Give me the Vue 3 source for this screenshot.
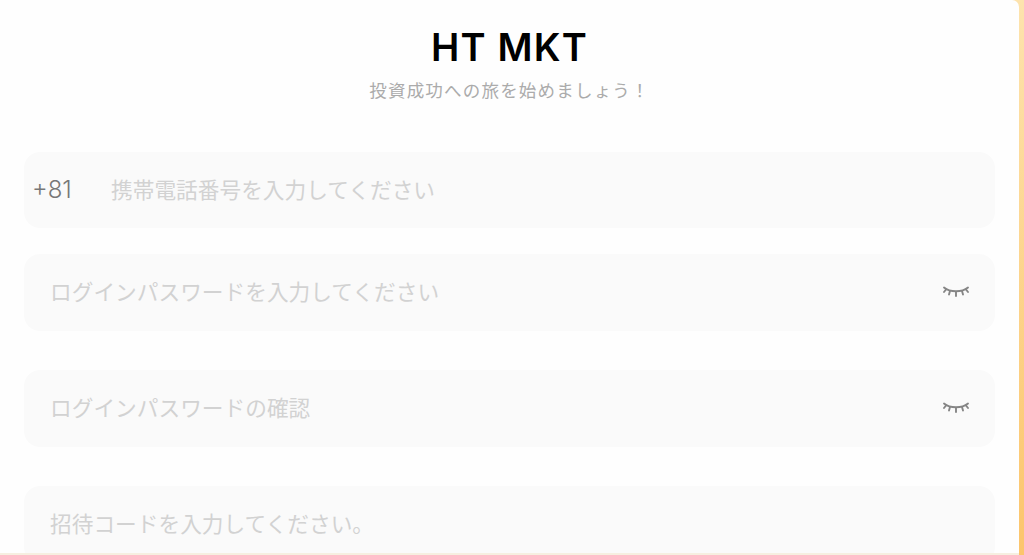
<template>
  <main class="page">
    <section class="card">
      <!-- Header -->
      <header class="head">
        <h1>HT MKT</h1>
        <p class="sub">投資成功への旅を始めましょう！</p>
      </header>

      <form class="form" @submit.prevent>
        <label class="field phone">
          <span class="code">+81</span>
          <input type="tel" placeholder="携帯電話番号を入力してください" />
        </label>

        <label v-for="f in passwordFields" :key="f" class="field">
          <input type="password" :placeholder="f" />
          <svg class="eye" width="26" height="12" viewBox="0 0 26 12" fill="none">
            <path d="M1 1.5C7 6.5 19 6.5 25 1.5" />
            <path d="M7 5L6 8.5M13 6V10M19 5L20 8.5M3 3.5L1 6M23 3.5L25 6" />
          </svg>
        </label>

        <label class="field">
          <input type="text" placeholder="招待コードを入力してください。" />
        </label>
      </form>
    </section>
  </main>
</template>

<script setup>
const passwordFields = [
  'ログインパスワードを入力してください',
  'ログインパスワードの確認',
]
</script>

<style>
html,
body {
  margin: 0;
  overflow: hidden;
}
</style>

<style scoped>
.page {
  height: 555px;
  box-sizing: border-box;
  padding-right: 5px;
  background: linear-gradient(180deg, #fde3ad, #fcc56c);
  overflow: hidden;
  font-family: "Liberation Sans", "Noto Sans CJK JP", sans-serif;
}

.card {
  height: 100%;
  box-sizing: border-box;
  padding: 0 24px;
  background: #fefefe;
  border-bottom: 2px solid #f6efe0;
  border-top-right-radius: 7px;
  overflow: hidden;
}

.head {
  padding-top: 25px;
  margin-bottom: 49px;
  text-align: center;
}

.head h1 {
  margin: 0 0 7px;
  font-family: Inter, "Liberation Sans", sans-serif;
  font-size: 38px;
  line-height: 45px;
  font-weight: 600;
  letter-spacing: 1.2px;
  color: #000;
}

.sub {
  margin: 0;
  font-family: "Noto Sans CJK JP", sans-serif;
  font-size: 17.5px;
  line-height: 26px;
  letter-spacing: 1.2px;
  color: #ababab;
}

.form {
  display: flex;
  flex-direction: column;
}

.field {
  display: flex;
  align-items: center;
  height: 77px;
  flex: none;
  box-sizing: border-box;
  padding: 0 26px;
  margin-bottom: 39px;
  background: #fafafa;
  border-radius: 16px;
}

.phone {
  height: 76px;
  margin-bottom: 26px;
  padding-left: 8px;
}

.code {
  width: 79px;
  flex: none;
  padding-bottom: 2px;
  font-family: Inter, "Liberation Sans", sans-serif;
  font-size: 24px;
  font-weight: 300;
  color: #777;
}

input {
  flex: 1;
  min-width: 0;
  padding: 0 0 4px;
  border: 0;
  outline: 0;
  background: transparent;
  font-family: "Noto Sans CJK JP", sans-serif;
  font-size: 21.7px;
  color: #333;
}

input::placeholder {
  color: #d2d2d2;
  opacity: 1;
}

.eye {
  flex: none;
  padding-bottom: 2px;
}

.eye path {
  stroke: #858585;
  stroke-width: 1.9;
  stroke-linecap: round;
}
</style>
